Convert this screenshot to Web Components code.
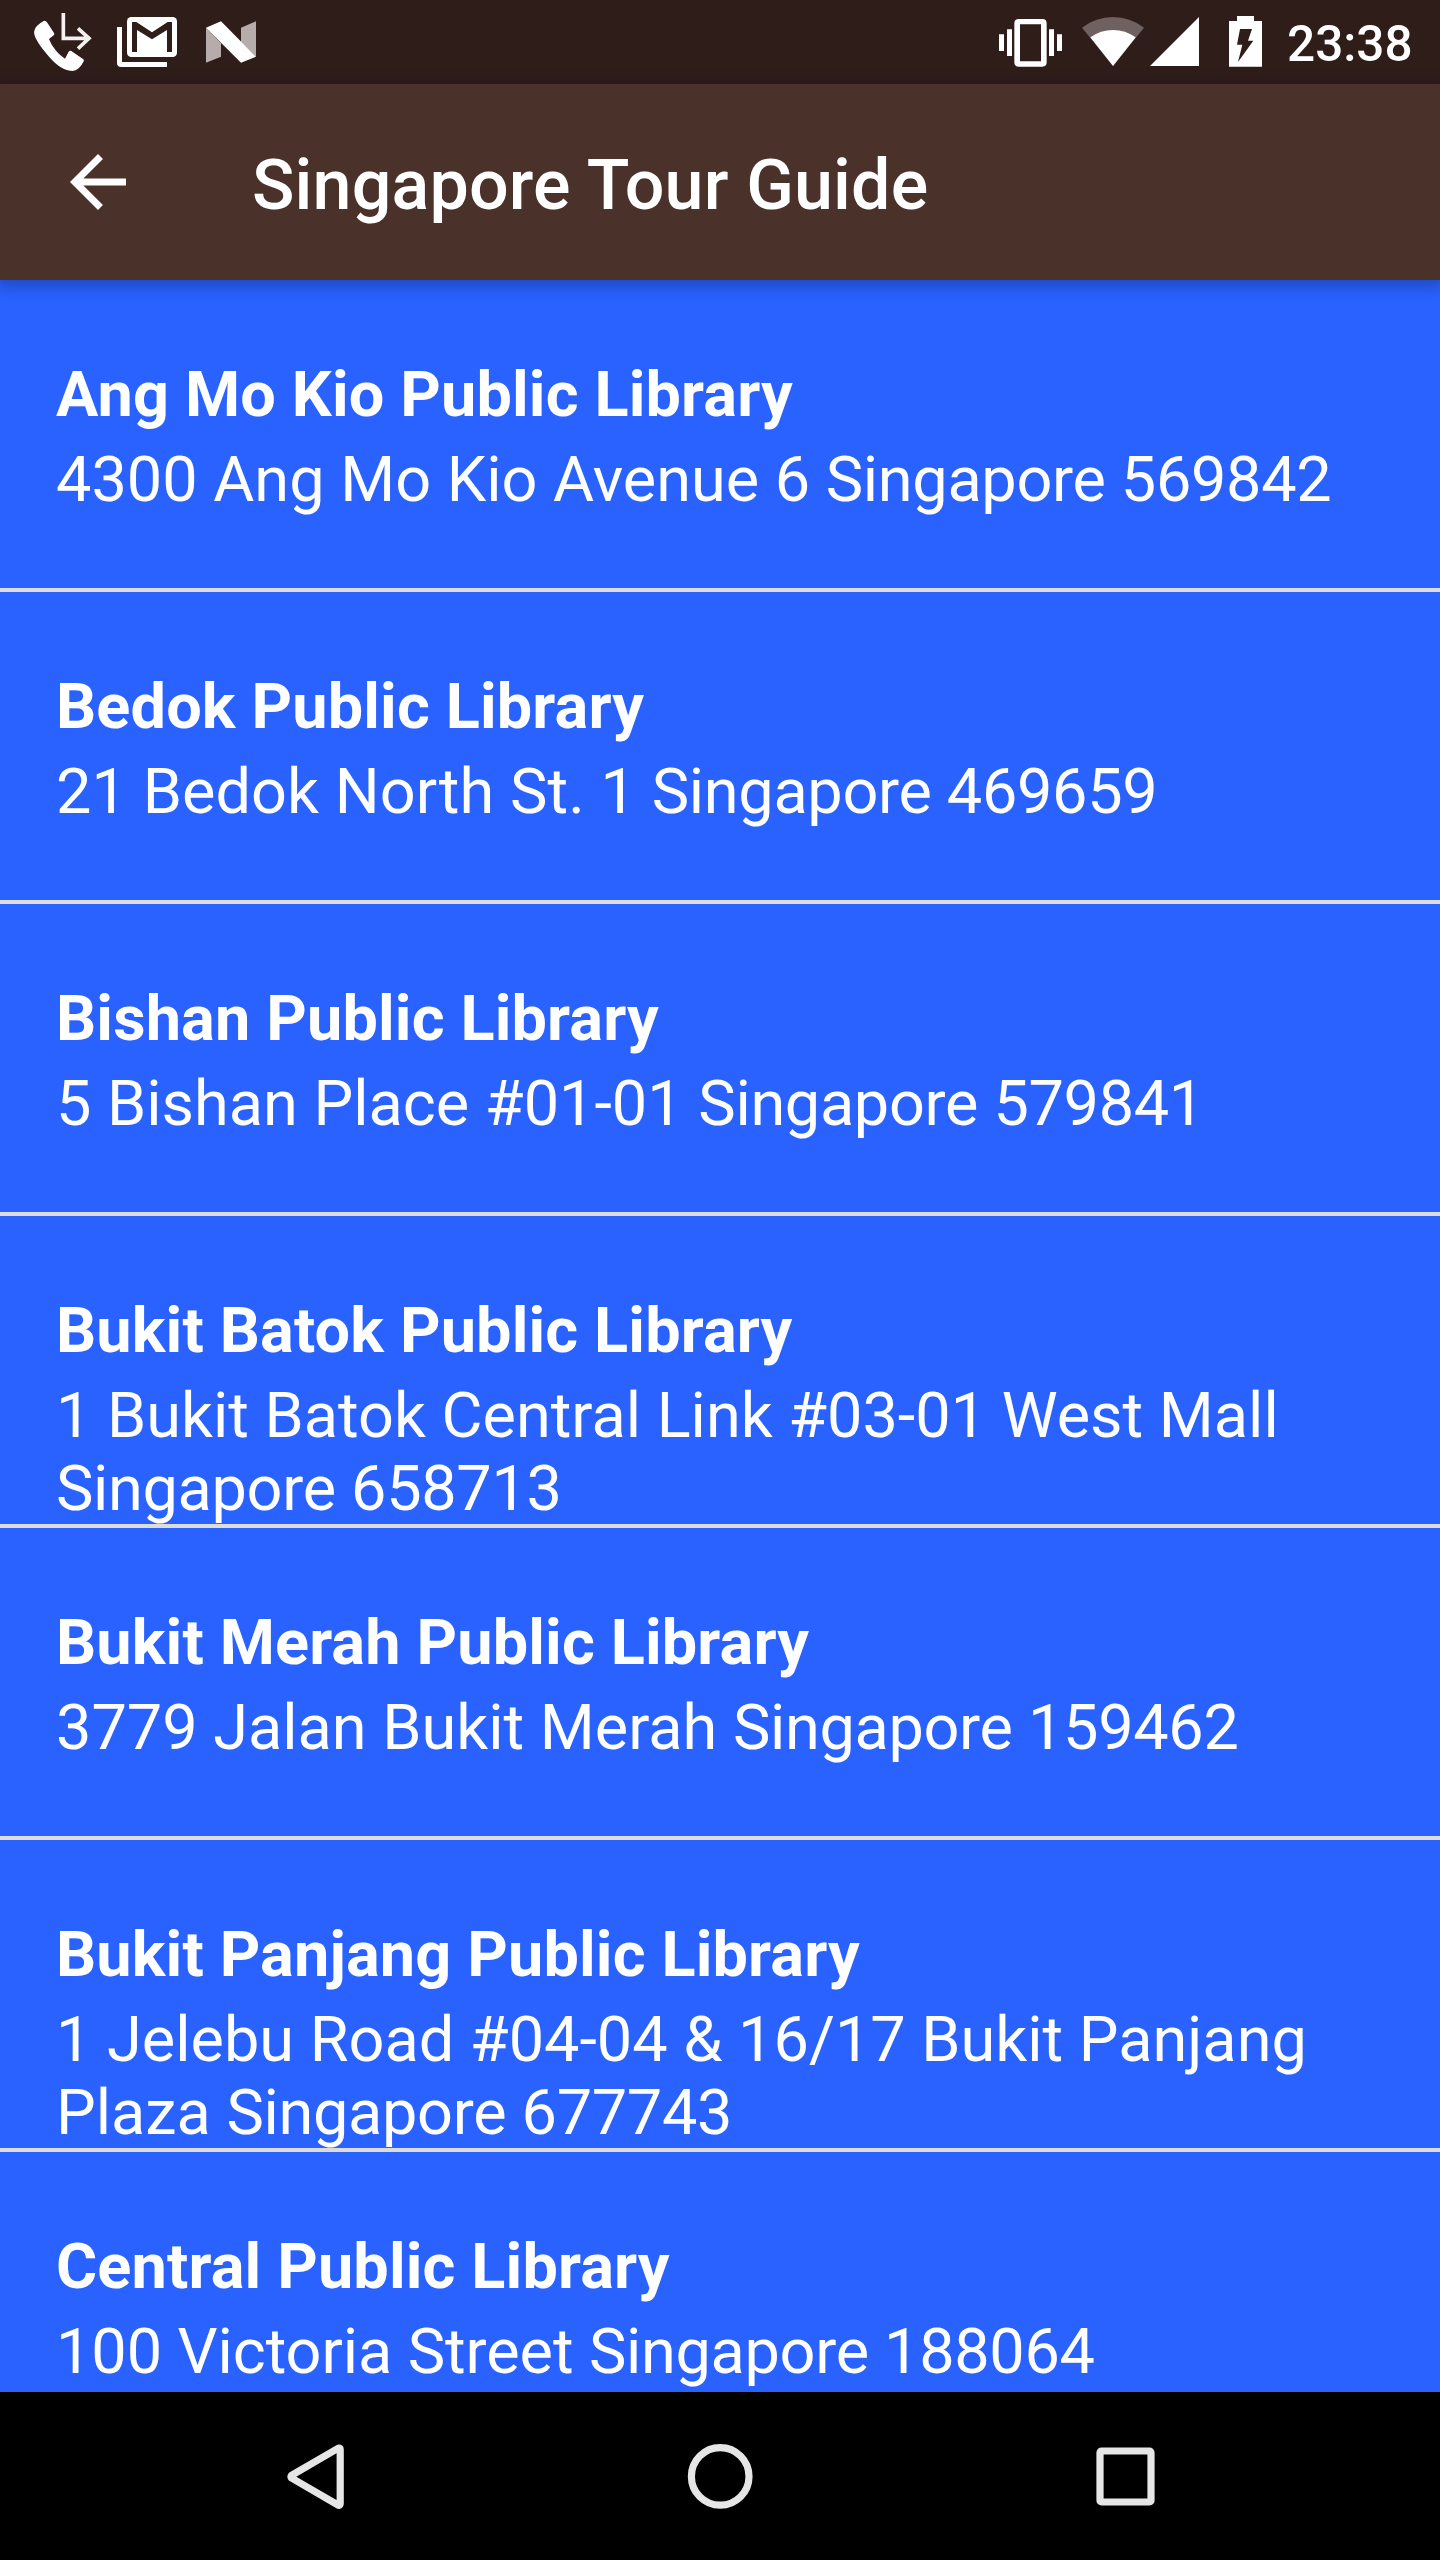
<!DOCTYPE html>
<html lang="en">
<head>
<meta charset="utf-8">
<title>Singapore Tour Guide</title>
<style>
html, body { margin: 0; background: #000; }
body { font-family: Roboto, sans-serif; color: #fff; }
</style>
</head>
<body>
<tour-app></tour-app>
<script>
const define = (name, html) => {
  const t = document.createElement('template');
  t.innerHTML = html;
  customElements.define(name, class extends HTMLElement {
    constructor() {
      super();
      this.attachShadow({ mode: 'open' }).appendChild(t.content.cloneNode(true));
    }
  });
};

define('status-bar', `
<style>
:host { display: flex; align-items: flex-start; height: 84px; background: #2F1D1A; box-sizing: border-box; }
svg { display: block; flex: none; fill: #fff; }
.spacer { flex: 1; }
.clock { font-size: 49.5px; font-weight: 500; line-height: 80px; height: 84px; width: 153px; padding-top: 4px; box-sizing: border-box; white-space: nowrap; }
.battery { margin-right: 17px; }
</style>
<svg width="100" height="84" viewBox="0 0 300 252">
  <path d="M131 63Q137 61 141 67L162 99Q165 103 161 106L147 117C156 140 174 162 195 176L206 155Q209 150 214 153L249 177Q254 180 251 184Q238 212 217 213C188 213 160 188 136 157C114 129 99 106 103 92Q106 77 131 63Z"/>
  <path d="M190 39V115H266M234 85L267 115L234 146" fill="none" stroke="#f3f0f0" stroke-width="11"/>
</svg>
<svg width="90" height="84" viewBox="300 0 270 252">
  <path d="M351 81H366V186H501V201H364Q351 201 351 188Z"/>
  <rect x="381" y="51" width="150" height="120" rx="13"/>
  <path fill="#2F1D1A" d="M396 66H409L456 97L503 66H516V156H501V90L456 118L411 90V156H396Z"/>
</svg>
<svg width="80" height="84" viewBox="570 0 240 252">
  <path fill="#b5acab" d="M618 83L663 130V170L618 188ZM723 83L768 64V170L723 125Z"/>
  <path d="M618 83L663 64L768 170L723 188Z"/>
</svg>
<div class="spacer"></div>
<svg width="90" height="84" viewBox="30 0 270 252">
  <path fill-rule="evenodd" d="M116 57H187Q200 57 200 70V187Q200 200 187 200H116Q103 200 103 187V70Q103 57 116 57ZM120 73V184H183V73Z"/>
  <path d="M57 103H72V153H57ZM81 88H96V168H81ZM207 88H222V168H207ZM231 103H246V153H231Z"/>
</svg>
<svg width="68" height="84" viewBox="300 0 204 252">
  <path fill="#6e615f" d="M306 83Q348 51 399 51T492 83L399 198Z"/>
  <path d="M331 112Q362 90 399 90T467 112L399 198Z"/>
</svg>
<svg width="60" height="84" viewBox="504 0 180 252"><path d="M510 198L657 51V198Z"/></svg>
<svg class="battery" width="62" height="84" viewBox="684 0 186 252">
  <path fill-rule="evenodd" d="M747 63H771V48H822V63H846V200H747ZM780 87L771 134H787L774 186L820 122H804L816 87Z"/>
</svg>
<div class="clock">23:38</div>
`);

define('app-bar', `
<style>
:host { display: flex; align-items: center; height: 196px; padding: 0 56px; box-sizing: border-box; background: #4A312A; position: relative; z-index: 1; box-shadow: 0 3px 14px 4px rgba(0,0,0,.25); }
svg { flex: none; fill: #fff; margin-right: 112px; }
h1 { margin: 0; font-size: 70px; font-weight: 500; line-height: 82px; padding-top: 6px; letter-spacing: .16px; white-space: nowrap; }
</style>
<svg width="84" height="84" viewBox="0 0 24 24"><path d="M20 11H7.83l5.59-5.59L12 4l-8 8 8 8 1.41-1.41L7.83 13H20v-2z"/></svg>
<h1><slot></slot></h1>
`);

define('place-row', `
<style>
:host { display: flex; flex-direction: column; flex: none; height: 312px; box-sizing: border-box; border-bottom: 4px solid #DCDCDC; padding: 78px 56px 0; font-size: 63px; }
.name { flex: none; font-weight: 700; line-height: 74px; height: 85px; letter-spacing: .15px; white-space: nowrap; }
.address { flex: none; line-height: 73px; white-space: nowrap; }
</style>
<div class="name"><slot name="name"></slot></div>
<div class="address"><slot></slot></div>
`);

define('place-list', `
<style>
:host { display: flex; flex-direction: column; flex: 1; min-height: 0; overflow: hidden; background: #2962FF; }
</style>
<slot></slot>
`);

define('nav-bar', `
<style>
:host { display: flex; justify-content: center; align-items: center; gap: 140px; height: 168px; background: #000; }
svg { display: block; fill: none; stroke: #e6e6e6; stroke-width: 7.2; }
</style>
<svg width="264" height="168" viewBox="184 2392 264 168"><path stroke-linejoin="round" d="M338.6 2448L291.5 2475.3Q290.5 2476.7 291.5 2478L338.6 2505.4Q340.2 2505 340.2 2503.5V2449.5Q340.2 2448 338.6 2448Z"/></svg>
<svg width="264" height="168" viewBox="588 2392 264 168"><circle cx="720.2" cy="2476.4" r="28.8"/></svg>
<svg width="264" height="168" viewBox="992 2392 264 168"><rect x="1100" y="2451" width="51" height="51" rx="1.5"/></svg>
`);

define('tour-app', `
<style>
:host { display: flex; flex-direction: column; width: 1440px; height: 2560px; overflow: hidden; }
.city { letter-spacing: -.32px; }
.wide { letter-spacing: .08px; }
.tight { letter-spacing: -.08px; }
</style>
<status-bar></status-bar>
<app-bar>Singapore Tour Guide</app-bar>
<place-list>
  <place-row><span slot="name">Ang Mo Kio Public Library</span>4300 Ang Mo Kio Avenue 6 <span class="city">Singapore 569842</span></place-row>
  <place-row class="wide"><span slot="name">Bedok Public Library</span>21 Bedok North St. 1 <span class="city">Singapore 469659</span></place-row>
  <place-row><span slot="name">Bishan Public Library</span>5 Bishan Place #01-01 <span class="city">Singapore 579841</span></place-row>
  <place-row><span slot="name">Bukit Batok Public Library</span>1 Bukit Batok Central Link #03-01 West Mall<br><span class="city">Singapore 658713</span></place-row>
  <place-row><span slot="name">Bukit Merah Public Library</span>3779 Jalan Bukit Merah <span class="city">Singapore 159462</span></place-row>
  <place-row><span slot="name">Bukit Panjang Public Library</span>1 Jelebu Road #04-04 &amp; 16/17 Bukit Panjang<br>Plaza <span class="city">Singapore 677743</span></place-row>
  <place-row class="tight"><span slot="name">Central Public Library</span>100 Victoria Street <span class="city">Singapore 188064</span></place-row>
</place-list>
<nav-bar></nav-bar>
`);
</script>
</body>
</html>
